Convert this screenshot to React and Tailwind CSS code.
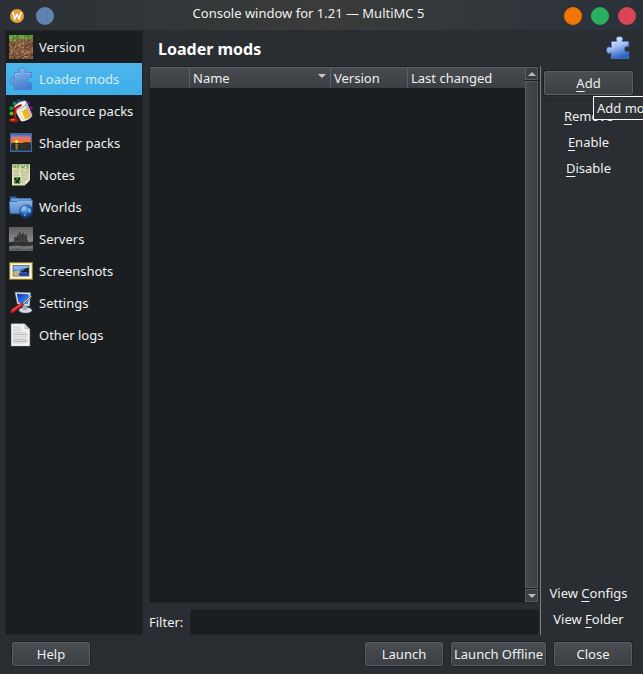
import React from "react";

const SOIL = ["#79553a", "#966c4a", "#5b3f2b", "#8a6244", "#b9855c", "#6b4a33", "#868079"];
const GRASS = ["#5d9a35", "#76b84a", "#4a7e2b", "#69a83f"];

function noise(x, y) {
  let h = Math.imul(x + 11, 374761393) + Math.imul(y + 5, 668265263);
  h = Math.imul(h ^ (h >>> 13), 1274126177);
  return ((h ^ (h >>> 16)) >>> 0) % 101;
}

const grassPixels = [];
for (let y = 0; y < 16; y++) {
  for (let x = 0; x < 16; x++) {
    const n = noise(x, y);
    const depth = 2 + (noise(x, 40) % 3);
    const fill = y < depth ? GRASS[n % 4] : SOIL[n > 95 ? 6 : n % 6];
    grassPixels.push({ x, y, fill });
  }
}

function Svg({ children, box = "0 0 24 24", ...rest }) {
  return (
    <svg viewBox={box} className="size-6 shrink-0" aria-hidden="true" {...rest}>
      {children}
    </svg>
  );
}

function GrassIcon() {
  return (
    <Svg box="0 0 16 16">
      <rect width="16" height="16" fill="#79553a" />
      {grassPixels.map((p) => (
        <rect key={`${p.x}-${p.y}`} x={p.x} y={p.y} width="1" height="1" fill={p.fill} />
      ))}
    </Svg>
  );
}

function PuzzleIcon({ id, top, middle, bottom, edge }) {
  return (
    <Svg>
      <defs>
        <linearGradient id={id} x1="0.1" y1="0" x2="0.45" y2="1">
          <stop offset="0" stopColor={top} />
          <stop offset="0.5" stopColor={middle} />
          <stop offset="1" stopColor={bottom} />
        </linearGradient>
      </defs>
      <path
        d="M5.5 5.5H10.8C11.4 4.8 10 3.8 10.3 2.4C10.6 1.2 12 .8 13.6.8C15.2.8 16.5 1.3 16.7 2.5C16.9 3.8 15.5 4.8 16.2 5.5H22.7V10.2C21.8 11 20.8 10.2 19.9 10.6C18.9 11 18.5 12 18.5 13.4C18.6 15 19.3 15.9 20.5 15.9C21.4 15.9 22.2 15 22.7 15.6V22.5H5.2V17.2C4.7 16.4 3.8 17.5 2.5 17.4C1.2 17.2.7 15.8.7 14.2C.7 12.4 1.4 11.2 2.7 11.1C3.9 11 4.9 12 5.5 11.2Z"
        fill={`url(#${id})`}
        stroke={edge}
        strokeWidth="0.8"
      />
      <path d="M6.4 10V6.4H11.6M17 6.4H21.8" fill="none" stroke="#fff" strokeOpacity="0.35" strokeWidth="0.8" />
    </Svg>
  );
}

function PaintIcon() {
  return (
    <Svg>
      <circle cx="9.8" cy="2.2" r="2" fill="#0b5a73" />
      <circle cx="5.6" cy="4.5" r="2" fill="#058a72" />
      <circle cx="2.4" cy="9.2" r="2" fill="#119b22" />
      <circle cx="2.5" cy="14.6" r="2" fill="#6bb50f" />
      <circle cx="14.5" cy="2.2" r="2" fill="#1a2e8c" />
      <circle cx="19.3" cy="4.3" r="2" fill="#411a8c" />
      <circle cx="22" cy="9" r="2" fill="#701086" />
      <circle cx="21.6" cy="14" r="2" fill="#8a0d62" />
      <ellipse cx="4.8" cy="21.3" rx="4.8" ry="2" fill="#a80f0f" />
      <ellipse cx="4" cy="20.7" rx="2.6" ry="0.7" fill="#f07070" />
      <path d="M5 9.5L17.4 2.6L23.2 16.5C21.5 20 16.5 22.8 12 22.2Z" fill="#e8e8e4" />
      <path d="M16 4L17.4 2.6L23.2 16.5C22.5 18 21 19.6 19.2 20.6Z" fill="#bcbcb8" />
      <path d="M10.5 12.8C13.5 12.6 16.2 11 18 8.7L21.3 16.4C19.6 18.7 16.8 20.2 13.6 20.4Z" fill="#e9b629" />
      <path d="M10.5 12.8L13 12.3L16 19.9L13.6 20.4Z" fill="#fff0a8" />
      <ellipse cx="11.2" cy="6.1" rx="7" ry="2.9" transform="rotate(-29 11.2 6.1)" fill="#f8f8f6" stroke="#777" strokeWidth="0.6" />
      <ellipse cx="9.6" cy="7.4" rx="3.8" ry="1.2" transform="rotate(-29 9.6 7.4)" fill="#b31414" />
      <path d="M5 8.5L7.7 8L7.2 15.5L6.5 20.6H5.2Z" fill="#bd1515" />
    </Svg>
  );
}

function SunsetIcon() {
  return (
    <Svg>
      <defs>
        <linearGradient id="sunset" x1="0" y1="0" x2="0" y2="1">
          <stop offset="0" stopColor="#3b6fb4" />
          <stop offset="0.35" stopColor="#c97f86" />
          <stop offset="0.7" stopColor="#ff6a2a" />
          <stop offset="1" stopColor="#ffa03a" />
        </linearGradient>
      </defs>
      <rect x="1" y="2" width="22" height="19" fill="#3a68a8" />
      <rect x="2.2" y="3.2" width="19.6" height="9.5" fill="url(#sunset)" />
      <path d="M2.2 12L7 11.4L12 12L17 11L21.8 11.6V19.6H2.2Z" fill="#2a2a26" />
      <circle cx="7.6" cy="10.5" r="1.8" fill="#ffe54d" />
      <path d="M6.3 13H9L8.7 18.8H6.8Z" fill="#8a7a2c" />
      <path d="M10 14H20M11 16.5H18" stroke="#3c3d38" strokeWidth="0.8" />
    </Svg>
  );
}

function NewsIcon() {
  return (
    <Svg>
      <path d="M3 1.2H21V17L15.5 22.6H3Z" fill="#e4e1b6" />
      <path d="M21 17L15.5 22.6L16 17.3Z" fill="#f7f5d6" stroke="#a5a37d" strokeWidth="0.5" />
      <path
        d="M4.2 5V2L6.6 5V2M10.5 2H8.3V5H10.5M8.3 3.5H10M12 2L12.8 5L13.8 2.8L14.8 5L15.6 2M19.4 2H17.5V3.5H19.2V5H17.2"
        fill="none"
        stroke="#5d9e48"
        strokeWidth="0.9"
      />
      <path d="M4.5 7H10.5M4.5 8.8H10.5M4.5 10.6H9.5M4.5 12.4H10.5M12.5 10.6H19.5M12.5 12.4H18.5M12.5 14.2H19.5M12.5 16H18M12.5 17.8H15.5M12.5 19.6H15" stroke="#b3b392" strokeWidth="0.8" />
      <rect x="12.8" y="6" width="6.2" height="3" fill="none" stroke="#a5a585" strokeWidth="0.8" />
      <rect x="5" y="14" width="6.5" height="6.5" fill="#569449" />
      <path d="M5.5 15H7.5V17H5.5ZM9 15H11V17H9ZM7.5 17H9V17.8H10V20.5H9V19.5H7.5V20.5H6.5V17.8H7.5Z" fill="#10200e" />
    </Svg>
  );
}

function WorldsIcon() {
  return (
    <Svg>
      <defs>
        <linearGradient id="folder" x1="0" y1="0" x2="0" y2="1">
          <stop offset="0" stopColor="#8fb8ea" />
          <stop offset="1" stopColor="#5487cc" />
        </linearGradient>
        <radialGradient id="globe" cx="0.4" cy="0.3" r="0.7">
          <stop offset="0" stopColor="#8ac4fa" />
          <stop offset="0.55" stopColor="#2767b8" />
          <stop offset="1" stopColor="#0b2c6b" />
        </radialGradient>
      </defs>
      <path d="M1 1.5H7L8.2 3H22.5V8H1Z" fill="#3566a9" />
      <path d="M2 3.7H22V6H2Z" fill="#78a6de" />
      <path d="M.2 6.4H8L9.2 5.2H23.6L22.8 18.8H1Z" fill="url(#folder)" stroke="#2c5c9f" strokeWidth="0.6" />
      <circle cx="17.1" cy="16.3" r="6.6" fill="url(#globe)" stroke="#183f80" strokeWidth="0.5" />
      <path d="M12.6 13.5L14.5 11.2L16.6 11.4L16 13L14.4 14L14.8 15.8L13.4 16.8L12 15.4ZM18.8 13.8L20.8 13L22.4 15.8L21 18.4L19.8 17L18.8 16.2ZM15 18.8L16.8 19.2L16.2 21.2L15 20.6Z" fill="#a9d5ff" fillOpacity="0.6" />
    </Svg>
  );
}

function CastleIcon() {
  return (
    <Svg>
      <defs>
        <linearGradient id="fog" x1="0" y1="0" x2="0" y2="1">
          <stop offset="0" stopColor="#5e5e5e" />
          <stop offset="0.6" stopColor="#8c8c8c" />
        </linearGradient>
      </defs>
      <rect width="24" height="24" fill="url(#fog)" />
      <path d="M5 15V10H8V8L10 7V5H11.5V7H13.5V5.8H15V8L18 7V12L19.5 13.5V18H5Z" fill="#404040" />
      <path d="M7.5 10.5H9V13H7.5ZM13 9H14V11H13ZM16 10H17V12H16Z" fill="#2a2a2a" />
      <path d="M0 15L4 14.5L8 16L14 15L20 15.2L24 14.6V20H0Z" fill="#303030" />
      <path d="M0 19.3L9 18.6L15 19.3L24 18.5V24H0Z" fill="#747474" />
      <path d="M0 22L8 21L16 22.2L24 21V24H0Z" fill="#5e5e5e" />
    </Svg>
  );
}

function FrameIcon() {
  return (
    <Svg>
      <rect x="0.4" y="3.4" width="23.2" height="17.2" fill="#efe5bb" stroke="#8a6a1c" strokeWidth="0.8" />
      <rect x="1.8" y="4.8" width="20.4" height="14.4" fill="#fffdf0" stroke="#dcc983" strokeWidth="0.6" />
      <rect x="4" y="6.5" width="16" height="10.6" fill="#4c83dd" />
      <path d="M4 7H20V9.2L13 9.6L9 11L4 10.6Z" fill="#82b4ee" />
      <path d="M4 12.5L9 11.5L12 12.6L9.5 14.5L11 17.1H4Z" fill="#c6ba80" />
      <path d="M20 8.4L16 9.6L14.6 11.2L11 12.2L13.6 13.4L16.6 13L20 14.5Z" fill="#142a17" />
      <path d="M9.5 14.5L13.6 13.2L20 14.4V17.1H11Z" fill="#2941ac" />
      <rect x="4" y="6.5" width="16" height="10.6" fill="none" stroke="#55554a" strokeWidth="0.7" />
    </Svg>
  );
}

function SettingsIcon() {
  return (
    <Svg>
      <defs>
        <linearGradient id="screen" x1="0" y1="0" x2="1" y2="1">
          <stop offset="0" stopColor="#0a2cb4" />
          <stop offset="1" stopColor="#4aa6ff" />
        </linearGradient>
      </defs>
      <ellipse cx="16.5" cy="19.2" rx="6.4" ry="2.8" fill="#d6dbe3" stroke="#8793a6" strokeWidth="0.5" />
      <path d="M13.5 13L18.5 14L17.7 19H13.8Z" fill="#9da9ba" />
      <path d="M6 1.2L21.5 1.7L20.5 15.2L8.4 13Z" fill="#dee5ef" stroke="#8996ab" strokeWidth="0.5" />
      <path d="M7.8 2.8L19.8 3.2L18.9 13.2L9.6 11.7Z" fill="url(#screen)" />
      <path d="M22.2 5L12.5 14.6" stroke="#606b75" strokeWidth="2.2" />
      <path d="M22.2 5L12.5 14.2" stroke="#dce3e7" strokeWidth="1" />
      <path d="M12.8 13.4L3.2 20.2" stroke="#c31b18" strokeWidth="3.6" strokeLinecap="round" />
      <path d="M12 13.3L3.2 19.4" stroke="#ff6b60" strokeWidth="1" strokeLinecap="round" />
    </Svg>
  );
}

function LogIcon() {
  return (
    <Svg>
      <path d="M2.2 .8H15.5L20.8 6.2V23H2.2Z" fill="#f3f3f3" stroke="#c3c3c3" strokeWidth="0.4" />
      <path d="M15.5 .8L20.8 6.2H15.5Z" fill="#c7c7c7" />
      <path d="M4 4.2H12M4 6H13M4 7.8H13M4 9.6H17M4 13.2H18.5M4 15H17M4 20H17" stroke="#c0c0c0" strokeWidth="0.7" />
      <path d="M4 11.4H18.5M4 16.8H18.5M4 18.4H18.5" stroke="#a3a3a3" strokeWidth="0.8" />
    </Svg>
  );
}

const PAGES = [
  ["Version", <GrassIcon />],
  ["Loader mods", <PuzzleIcon id="puzzleNav" top="#8fbcec" middle="#6a9fe0" bottom="#4a7fd0" edge="#3f80cc" />],
  ["Resource packs", <PaintIcon />],
  ["Shader packs", <SunsetIcon />],
  ["Notes", <NewsIcon />],
  ["Worlds", <WorldsIcon />],
  ["Servers", <CastleIcon />],
  ["Screenshots", <FrameIcon />],
  ["Settings", <SettingsIcon />],
  ["Other logs", <LogIcon />],
];

function PushButton({ children, className = "min-w-20" }) {
  return (
    <button
      type="button"
      className={`h-[26px] rounded-[3px] border border-[#1f2225] bg-linear-to-b from-[#4a4d51] to-[#3b3e42] text-center inset-ring inset-ring-[#5a5d61] ${className}`}
    >
      {children}
    </button>
  );
}

function Mnemonic({ children }) {
  return <span className="underline decoration-1 underline-offset-3">{children}</span>;
}

function ToolButton({ children }) {
  return (
    <button type="button" className="h-[26px] w-full text-center">
      {children}
    </button>
  );
}

function ScrollArrow({ up }) {
  return (
    <button
      type="button"
      aria-label={up ? "Scroll up" : "Scroll down"}
      className="flex h-[13px] w-full shrink-0 items-center justify-center border border-[#5a5d60] bg-[#3b3e42]"
    >
      <svg viewBox="0 0 8 4" className="h-1 w-2" aria-hidden="true">
        <path d={up ? "M0 4L4 0L8 4Z" : "M0 0L4 4L8 0Z"} fill="#b7b9ba" />
      </svg>
    </button>
  );
}

function TitleBar() {
  return (
    <header className="grid h-[30px] shrink-0 grid-cols-[80px_1fr_80px] items-center bg-linear-to-r from-[#2b3036] via-[#3a3c3a] to-[#29313a]">
      <div className="flex items-center gap-3 pt-px pl-[10px]">
        <svg viewBox="0 0 14 14" className="size-[14px]" aria-hidden="true">
          <circle cx="7" cy="7" r="7" fill="#e2a034" />
          <path d="M3 3.8L4.9 10.2L7 5L9.1 10.2L11 3.8" fill="none" stroke="#fff" strokeWidth="1.5" strokeLinecap="round" strokeLinejoin="round" />
        </svg>
        <button type="button" aria-label="Window menu" className="size-[18px] rounded-full bg-[#6082b0]" />
      </div>
      <h1 className="pr-[26px] pb-1 text-center text-[13px] leading-5">Console window for 1.21 — MultiMC 5</h1>
      <div className="flex items-center justify-end gap-[9px] pt-px pr-[7px]">
        <button type="button" aria-label="Minimize" className="size-[18px] rounded-full bg-[#f67400]" />
        <button type="button" aria-label="Maximize" className="size-[18px] rounded-full bg-[#27ae60]" />
        <button type="button" aria-label="Close window" className="size-[18px] rounded-full bg-[#da4453]" />
      </div>
    </header>
  );
}

export default function App() {
  return (
    <div className="flex min-h-screen flex-col overflow-hidden bg-[#2a2d32] font-['Noto_Sans',sans-serif] text-[13px] leading-5 text-[#eff0f1]">
      <TitleBar />
      <div className="flex flex-1 px-[5px]">
        <nav className="w-[138px] shrink-0 border border-[#222529] bg-[#1b1e20]">
          {PAGES.map(([label, icon]) => (
            <a
              key={label}
              href="#"
              aria-current={label === "Loader mods" ? "page" : undefined}
              className={`flex h-8 items-center gap-[6px] pl-[3px] whitespace-nowrap ${
                label === "Loader mods" ? "bg-linear-to-b from-[#4fb4ec] to-[#3daee9] text-[#d5ecf9]" : ""
              }`}
            >
              {icon}
              {label}
            </a>
          ))}
        </nav>

        <main className="flex min-w-0 flex-1 flex-col pl-[6px]">
          <div className="flex h-9 shrink-0 items-center justify-between pr-2 pl-[9px]">
            <h2 className="pt-[2px] text-base leading-6 font-bold text-white">Loader mods</h2>
            <PuzzleIcon id="puzzleHead" top="#f0f5ff" middle="#a3bef0" bottom="#2f62cc" edge="#4a74c4" />
          </div>

          <div className="flex flex-1">
            <div className="flex min-w-0 flex-1 flex-col">
              <div className="flex flex-1 border border-[#212427] bg-[#1b1e20]">
                <div className="min-w-0 flex-1">
                  <table className="w-full table-fixed border-separate border-spacing-0">
                    <thead>
                      <tr className="h-[21px] bg-linear-to-b from-[#484b4f] to-[#3b3e42] text-left shadow-[inset_0_1px_0_#55585b]">
                        <th scope="col" aria-label="Enabled" className="w-10 border-r border-[#5c5f62] p-0" />
                        <th scope="col" className="w-[141px] border-r border-[#5c5f62] p-0 pl-[3px] font-normal">
                          <span className="flex items-center justify-between pr-1">
                            Name
                            <svg viewBox="0 0 8 4" className="mb-1 h-1 w-2" aria-hidden="true">
                              <path d="M0 0H8L4 4Z" fill="#c5c7c8" />
                            </svg>
                          </span>
                        </th>
                        <th scope="col" className="w-[77px] border-r border-[#5c5f62] p-0 pl-[3px] font-normal">Version</th>
                        <th scope="col" className="p-0 pl-[3px] font-normal">Last changed</th>
                      </tr>
                    </thead>
                  </table>
                </div>
                <div className="flex w-[13px] shrink-0 flex-col gap-px">
                  <ScrollArrow up />
                  <div className="flex-1 border border-[#5a5d60] bg-linear-to-r from-[#45484c] to-[#3b3e42]" />
                  <ScrollArrow />
                </div>
              </div>
              <div className="flex items-center gap-[7px] pt-[6px]">
                <label htmlFor="filter">Filter:</label>
                <input
                  id="filter"
                  type="text"
                  className="h-[26px] min-w-0 flex-1 rounded-[3px] border border-[#212427] bg-[#1b1e20] px-1 outline-none"
                />
              </div>
            </div>

            <div className="ml-px flex w-[98px] shrink-0 flex-col border-l border-[#7b7e81] pr-[2px]">
              <div className="relative mt-1 mb-1 flex px-[2px]">
                <PushButton className="w-full">
                  <Mnemonic>A</Mnemonic>dd
                </PushButton>
                <div
                  role="tooltip"
                  className="absolute top-[26px] left-[52px] z-10 h-6 border border-white bg-[#2e3338] px-[3px] leading-[22px] whitespace-nowrap"
                >
                  Add mods
                </div>
              </div>
              <div className="mx-1 mb-[2px] h-px bg-[#202326]" />
              <ToolButton>
                <Mnemonic>R</Mnemonic>emove
              </ToolButton>
              <ToolButton>
                <Mnemonic>E</Mnemonic>nable
              </ToolButton>
              <ToolButton>
                <Mnemonic>D</Mnemonic>isable
              </ToolButton>
              <div className="flex-1" />
              <ToolButton>
                View <Mnemonic>C</Mnemonic>onfigs
              </ToolButton>
              <div className="pb-[3px]">
                <ToolButton>
                  View <Mnemonic>F</Mnemonic>older
                </ToolButton>
              </div>
            </div>
          </div>
        </main>
      </div>

      <footer className="flex shrink-0 gap-[6px] pt-[6px] pr-[10px] pb-[7px] pl-[11px]">
        <PushButton>Help</PushButton>
        <div className="flex-1" />
        <PushButton>Launch</PushButton>
        <PushButton className="px-[3px] whitespace-nowrap">Launch Offline</PushButton>
        <PushButton>Close</PushButton>
      </footer>
    </div>
  );
}
